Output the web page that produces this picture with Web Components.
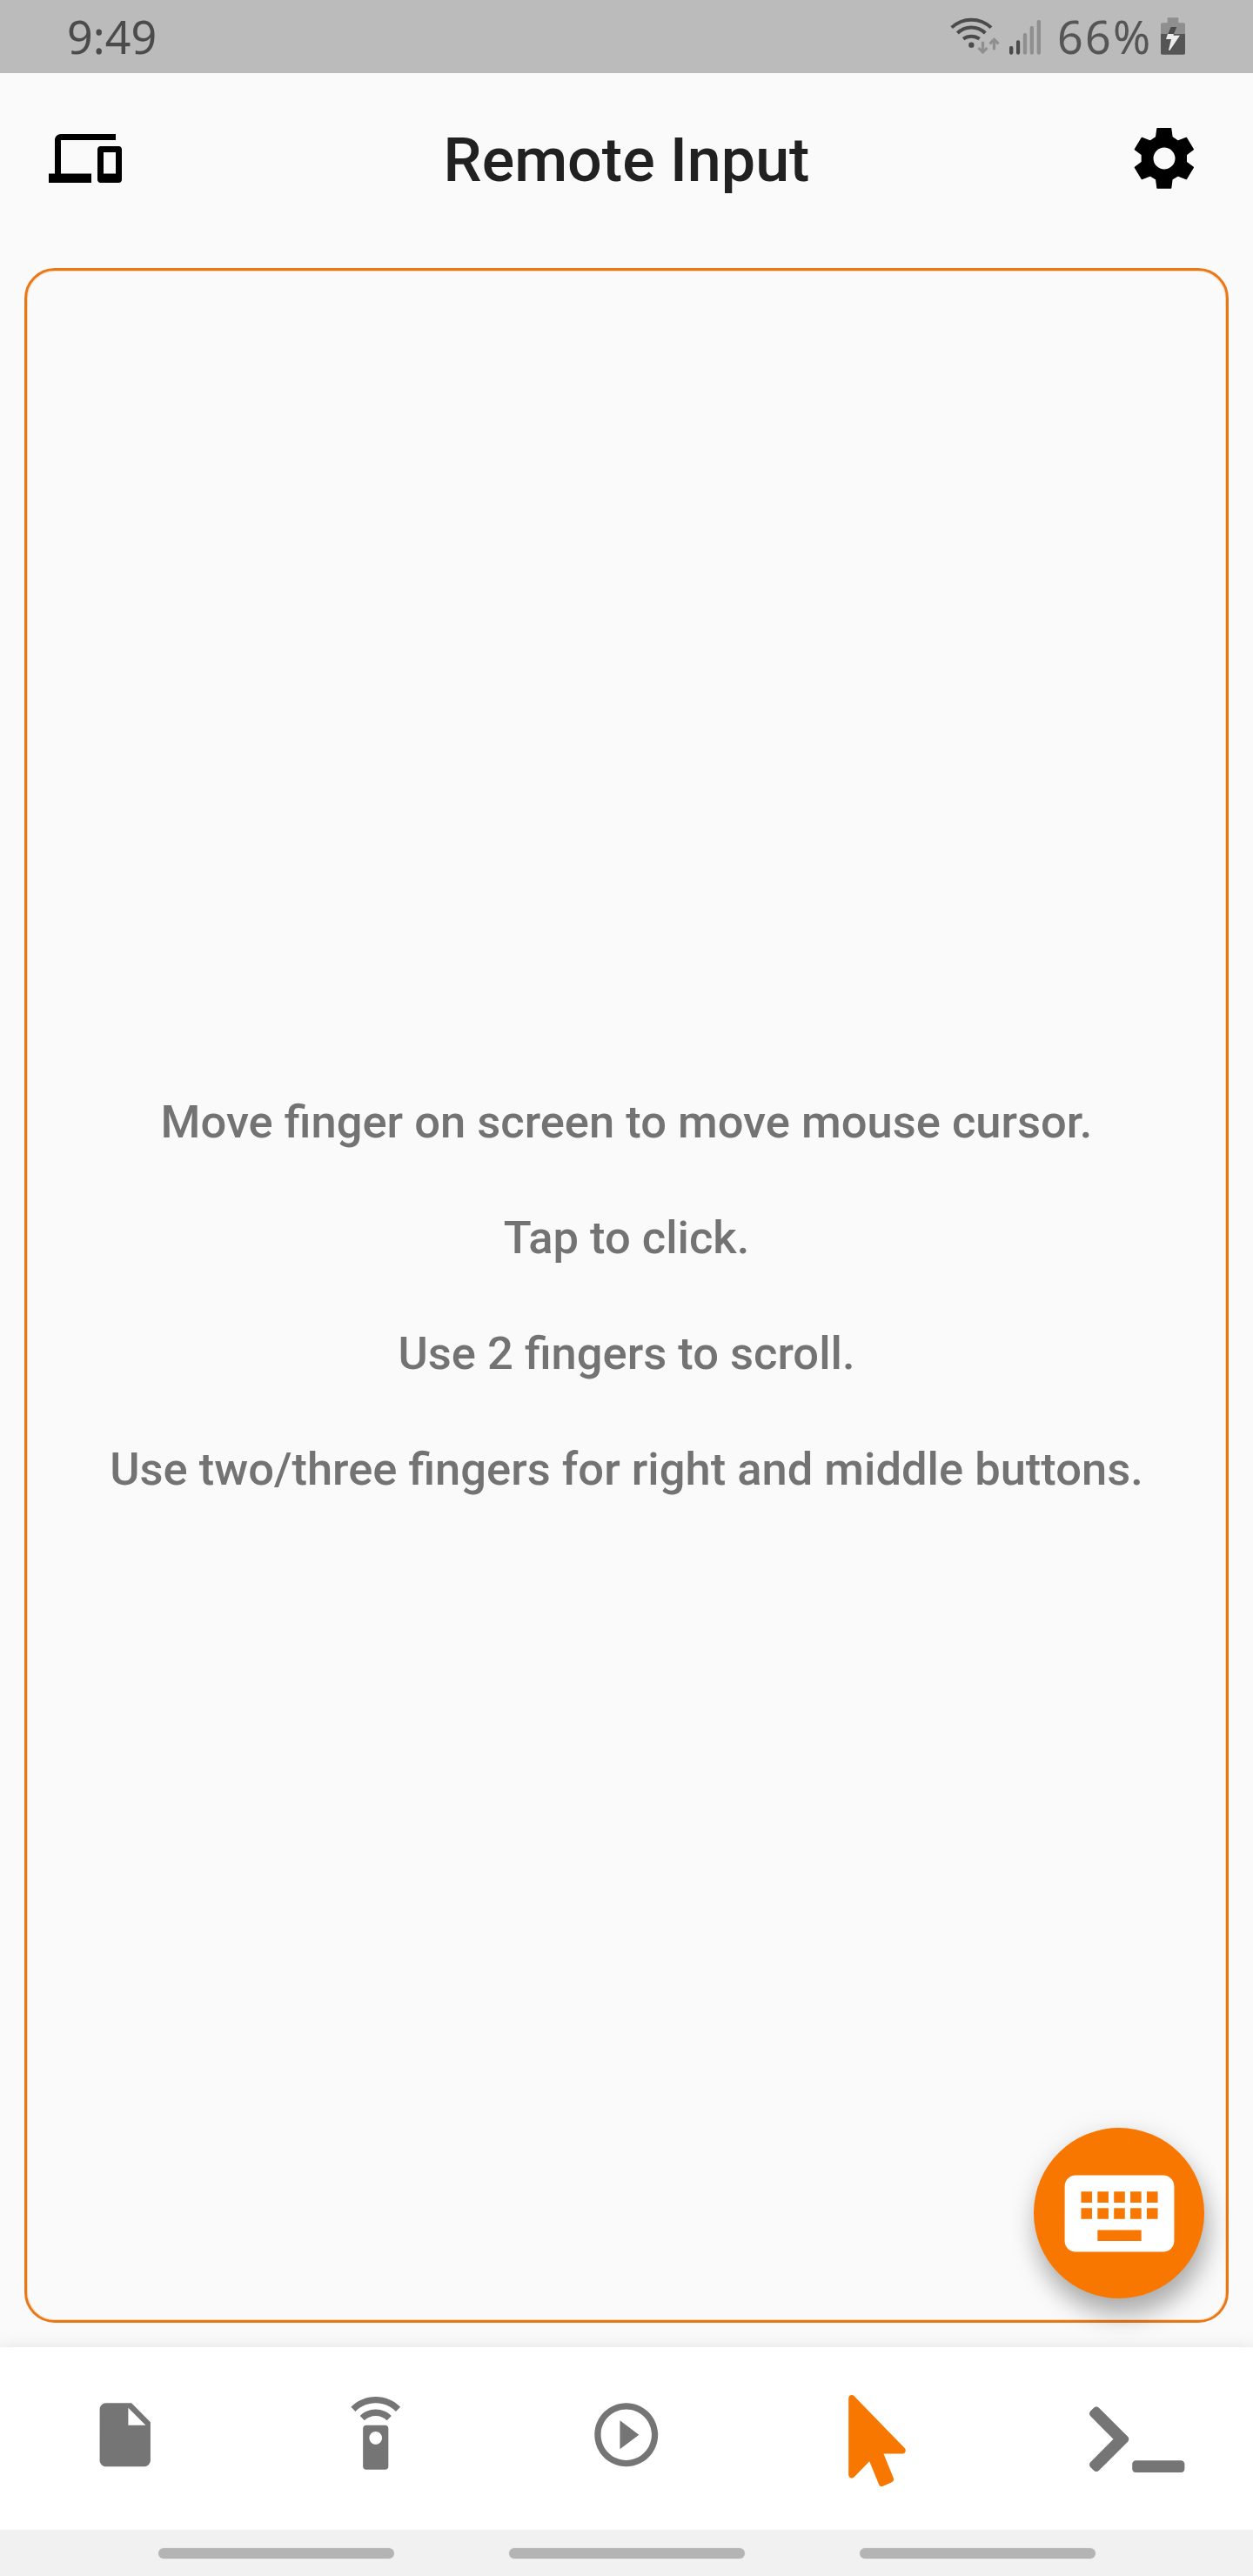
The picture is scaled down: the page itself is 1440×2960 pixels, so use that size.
<!DOCTYPE html>
<html lang="en">
<head>
<meta charset="utf-8">
<title>Remote Input</title>
<style>
html,body{margin:0;padding:0;background:#fafafa}
</style>
</head>
<body>
<remote-app></remote-app>
<script>
const define = (name, html) => customElements.define(name, class extends HTMLElement {
  constructor() {
    super();
    const t = document.createElement('template');
    t.innerHTML = html;
    this.attachShadow({ mode: 'open' }).appendChild(t.content.cloneNode(true));
  }
});

define('status-bar', `
<style>
:host{display:flex;box-sizing:border-box;height:84px;background:#bbb;padding:0 77px 0 77px;align-items:stretch;justify-content:space-between;
font:400 52px/84px "Noto Sans",sans-serif;color:#4b4b4b}
.time,.pct{display:block;white-space:nowrap}
.right{display:flex}
svg{display:block;flex:none}
.pct{box-sizing:border-box;color:#555;width:118px;padding-left:1px;letter-spacing:2.2px}
</style>
<span class="time">9:49</span>
<div class="right">
<svg width="124" height="84" viewBox="90 0 372 252" fill="none">
  <g stroke="#4b4b4b" stroke-width="12">
    <path d="M101 95A99 99 0 0 1 237 95"/><path d="M121 114A68 68 0 0 1 217 114"/><path d="M141 134A48 48 0 0 1 197 134"/>
  </g>
  <circle cx="169" cy="155" r="9.5" fill="#4b4b4b"/>
  <g stroke="#8f8f8f" stroke-width="9.5">
    <path d="M208.500 143V180M193.500 165L208.500 180L223.500 165"/><path d="M247.500 172V136M232.500 151L247.500 136L262.500 151"/>
  </g>
  <g fill="#4b4b4b"><rect x="300" y="159" width="13" height="29" rx="5.500"/><rect x="324" y="139" width="12.500" height="49" rx="5.500"/></g>
  <g fill="#8f8f8f"><rect x="347.500" y="114" width="13" height="74" rx="5.500"/><rect x="371" y="90" width="13" height="98" rx="5.500"/><rect x="395" y="69" width="13" height="119" rx="5.500"/></g>
</svg>
<span class="pct">66%</span>
<svg width="31" height="84" viewBox="816 0 93 252">
  <path fill="#8f8f8f" d="M845 64q0-3 3-3h32q3 0 3 3v15h17q6 0 6 6v33h-84V85q0-6 6-6h17z"/>
  <path fill="#555" d="M822 117h84v66q0 5-5 5h-74q-5 0-5-5z"/>
  <path fill="#4b4b4b" d="M857 93h20l-10 24h-20z"/>
  <path fill="#ededed" d="M846 117h20v5h22l-35 52-4-1 9-38h-18z"/>
</svg>
</div>`);

define('icon-devices', `<style>:host{display:block;width:84px;height:84px}svg{display:block}</style>
<svg width="84" height="84" viewBox="0 0 24 24"><path d="M4 6h18V4H4c-1.1 0-2 .9-2 2v11H0v3h14v-3H4V6zm19 2h-6c-.55 0-1 .45-1 1v10c0 .55.45 1 1 1h6c.55 0 1-.45 1-1V9c0-.55-.45-1-1-1zm-1 9h-4v-7h4v7z"/></svg>`);

define('icon-gear', `<style>:host{display:block;width:84px;height:84px}svg{display:block}</style>
<svg width="84" height="84" viewBox="710 420 252 252"><path fill-rule="evenodd" stroke="#000" stroke-width="4" stroke-linejoin="round" d="M812 443H859L863 473L883 486L912 475L936 515L912 533V559L936 577L912 617L883 606L863 618L859 648H812L808 618L788 606L759 617L735 577L759 559V533L735 515L759 475L788 486L808 473ZM836 506.500A39.500 39.500 0 1 0 836 585.500A39.500 39.500 0 1 0 836 506.500Z"/></svg>`);

define('app-header', `
<style>
:host{display:grid;grid-template-columns:84px 1fr 84px;box-sizing:border-box;height:196px;padding:0 60px 0 56px;align-items:center}
h1{margin:0;padding:4px 0 0 4px;text-align:center;font:500 70px/84px Roboto,sans-serif;color:#212121}
</style>
<slot name="start"></slot><h1><slot></slot></h1><slot name="end"></slot>`);

define('touch-pad', `
<style>
:host{display:flex;flex-direction:column;justify-content:center;box-sizing:border-box;flex:1;border:3px solid #e87817;border-radius:35px;
box-shadow:inset 0 0 0 1px rgba(245,150,50,.35);text-align:center;font:500 52.5px/133px Roboto,sans-serif;color:#737373}
</style><slot></slot>`);

define('pad-hint', `<style>:host{display:block;white-space:nowrap}</style><slot></slot>`);

define('keyboard-fab', `
<style>
:host{display:flex;position:absolute;right:56px;bottom:319px;width:196px;height:196px;border-radius:50%;background:#f77700;align-items:center;justify-content:center;
box-shadow:4px 20px 28px rgba(0,0,0,.27),0 3px 32px rgba(0,0,0,.09)}
svg{display:block}
</style>
<svg width="151" height="151" viewBox="0 0 24 24" fill="#fff"><path d="M20 5H4c-1.100 0-1.990.9-1.990 2L2 17c0 1.100.9 2 2 2h16c1.100 0 2-.9 2-2V7c0-1.100-.9-2-2-2zm-9 3h2v2h-2V8zm0 3h2v2h-2v-2zM8 8h2v2H8V8zm0 3h2v2H8v-2zm-1 2H5v-2h2v2zm0-3H5V8h2v2zm9 7H8v-2h8v2zm0-4h-2v-2h2v2zm0-3h-2V8h2v2zm3 3h-2v-2h2v2zm0-3h-2V8h2v2z"/></svg>`);

define('tab-bar', `
<style>
:host{display:grid;grid-template-columns:repeat(5,1fr);height:210px;background:#fff;box-shadow:0 0 18px rgba(0,0,0,.1);color:#757575}
</style><slot></slot>`);

const tab = (name, top, svg, extra = '') => define(name, `
<style>:host{display:flex;box-sizing:border-box;padding-top:${top}px;justify-content:center;align-items:flex-start}svg{display:block;flex:none;fill:currentColor}${extra}</style>${svg}`);

tab('tab-files', 57, `<svg width="87.5" height="87.5" viewBox="0 0 24 24"><path d="M6 2c-1.100 0-1.990.9-1.990 2L4 20c0 1.100.89 2 1.990 2H18c1.100 0 2-.9 2-2V8l-6-6H6zm7 7V3.500L18.500 9H13z"/></svg>`);
tab('tab-remote', 57, `<svg width="87.5" height="87.5" viewBox="0 0 24 24"><path d="M15 9H9c-.55 0-1 .45-1 1v12c0 .55.45 1 1 1h6c.55 0 1-.45 1-1V10c0-.55-.45-1-1-1zm-3 6c-1.100 0-2-.9-2-2s.9-2 2-2 2 .9 2 2-.9 2-2 2zM7.050 6.050l1.410 1.410C9.370 6.560 10.620 6 12 6s2.630.56 3.540 1.460l1.410-1.410C15.680 4.780 13.930 4 12 4s-3.680.78-4.950 2.050zM12 0C8.960 0 6.210 1.230 4.220 3.220l1.410 1.410C7.260 3.010 9.510 2 12 2s4.740 1.010 6.360 2.640l1.410-1.410C17.790 1.230 15.040 0 12 0z"/></svg>`);
tab('tab-play', 57, `<svg width="87.5" height="87.5" viewBox="0 0 24 24"><path d="M10 16.500l6-4.500-6-4.500v9zM12 2C6.480 2 2 6.480 2 12s4.480 10 10 10 10-4.480 10-10S17.520 2 12 2zm0 18c-4.410 0-8-3.590-8-8s3.590-8 8-8 8 3.590 8 8-3.590 8-8 8z"/></svg>`);
tab('tab-pointer', 55, `<svg width="66" height="105" viewBox="0 0 320 512"><path d="M302.189 329.126H196.105l55.831 135.993c3.889 9.428-.555 19.999-9.444 23.999l-49.165 21.427c-9.165 4-19.443-.571-23.332-9.714l-53.053-129.136-86.664 89.138C18.729 472.710 0 463.554 0 447.977V18.299C0 1.899 19.921-6.096 30.277 5.443l284.412 292.542c11.472 11.179 3.007 31.141-12.500 31.141z"/></svg>`, ':host{color:#f77700;padding-right:1px}');
tab('tab-terminal', 61.5, `<svg width="109.4" height="87.5" viewBox="0 0 640 512"><path d="M257.981 272.971L63.638 467.314c-9.373 9.373-24.569 9.373-33.941 0L7.029 444.647c-9.357-9.357-9.375-24.522-.04-33.901L161.011 256 6.990 101.255c-9.335-9.379-9.317-24.544.04-33.901l22.667-22.667c9.373-9.373 24.569-9.373 33.941 0L257.981 239.030c9.373 9.372 9.373 24.568 0 33.941zM640 456v-32c0-13.255-10.745-24-24-24H312c-13.255 0-24 10.745-24 24v32c0 13.255 10.745 24 24 24h304c13.255 0 24-10.745 24-24z"/></svg>`, ':host{padding-left:22px}');

define('gesture-bar', `
<style>
:host{display:flex;box-sizing:border-box;height:53px;background:#f1f1f1;justify-content:center;gap:132px;padding-top:21px;position:relative}
i{display:block;width:271px;height:12px;border-radius:6px;background:#b4b4b4;box-shadow:0 0 0 1px #ebebeb}
</style><i></i><i></i><i></i>`);

define('remote-app', `
<style>
:host{display:flex;flex-direction:column;position:relative;width:1440px;height:2960px;background:#fafafa;overflow:hidden}
main{flex:1;display:flex;padding:28px}
tab-bar{position:relative}
</style>
<status-bar></status-bar>
<app-header><icon-devices slot="start"></icon-devices>Remote Input<icon-gear slot="end"></icon-gear></app-header>
<main><touch-pad>
<pad-hint>Move finger on screen to move mouse cursor.</pad-hint>
<pad-hint>Tap to click.</pad-hint>
<pad-hint>Use 2 fingers to scroll.</pad-hint>
<pad-hint>Use two/three fingers for right and middle buttons.</pad-hint>
</touch-pad></main>
<keyboard-fab></keyboard-fab>
<tab-bar><tab-files></tab-files><tab-remote></tab-remote><tab-play></tab-play><tab-pointer></tab-pointer><tab-terminal></tab-terminal></tab-bar>
<gesture-bar></gesture-bar>`);
</script>
</body>
</html>
